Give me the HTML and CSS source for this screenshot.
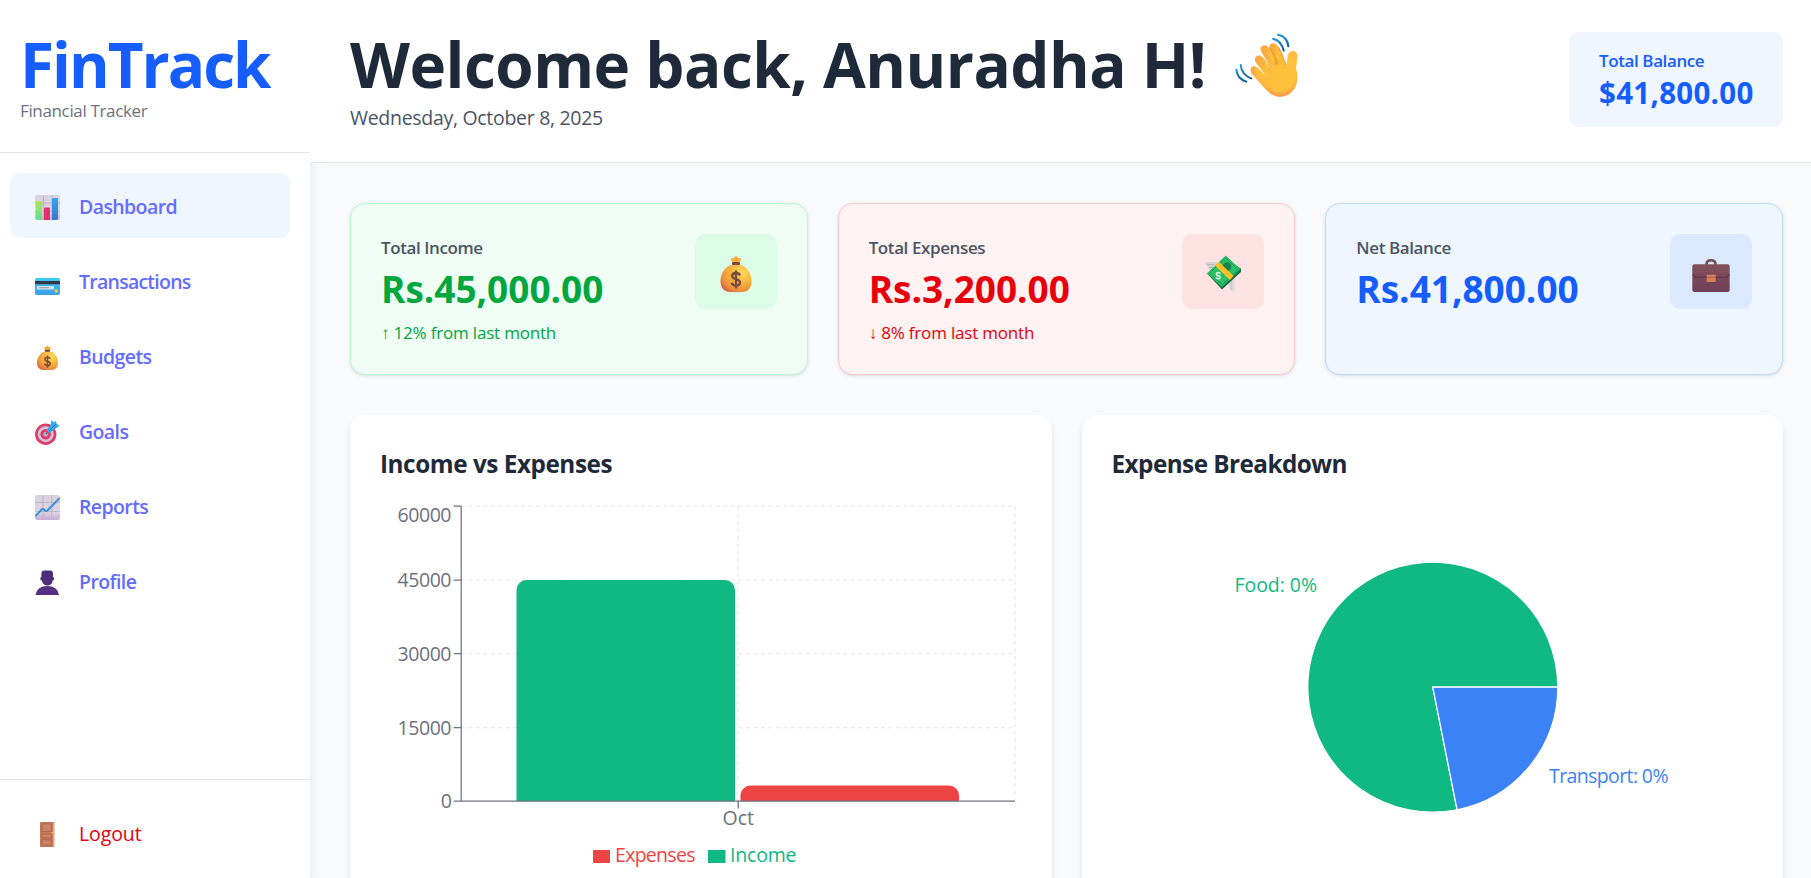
FILE: index.html
```
<!DOCTYPE html>
<html lang="en">
<head>
<meta charset="utf-8">
<title>FinTrack</title>
<link rel="stylesheet" href="styles.css">
</head>
<body>
<svg class="defs" width="0" height="0" aria-hidden="true">
  <defs>
    <linearGradient id="paper" x1="0" y1="0" x2="0" y2="1"><stop offset="0" stop-color="#d9d3df"/><stop offset=".7" stop-color="#ddd3e5"/><stop offset="1" stop-color="#c5aed6"/></linearGradient>
    <linearGradient id="lime" x1="0" y1="0" x2="0" y2="1"><stop offset="0" stop-color="#b4e35c"/><stop offset="1" stop-color="#5fe08c"/></linearGradient>
    <linearGradient id="azure" x1="0" y1="0" x2="0" y2="1"><stop offset="0" stop-color="#36a5ef"/><stop offset="1" stop-color="#3a78c0"/></linearGradient>
    <linearGradient id="cyan" x1="0" y1="0" x2="0" y2="1"><stop offset="0" stop-color="#38cdf0"/><stop offset="1" stop-color="#3a9ce8"/></linearGradient>
    <radialGradient id="gold" cx=".68" cy=".3" r=".8"><stop offset="0" stop-color="#ffd95a"/><stop offset=".45" stop-color="#f7b63f"/><stop offset=".8" stop-color="#ee913c"/><stop offset="1" stop-color="#d8663f"/></radialGradient>
    <radialGradient id="skin" cx=".6" cy=".35" r=".75"><stop offset="0" stop-color="#ffc93a"/><stop offset=".6" stop-color="#ffbc3e"/><stop offset="1" stop-color="#fb8a53"/></radialGradient>
    <linearGradient id="finger" x1="0" y1="0" x2="1" y2="0"><stop offset="0" stop-color="#fca941"/><stop offset=".6" stop-color="#ffc43a"/><stop offset="1" stop-color="#e49b28"/></linearGradient>
    <linearGradient id="motion" x1="0" y1="0" x2="0" y2="1"><stop offset="0" stop-color="#2196dd"/><stop offset="1" stop-color="#155694"/></linearGradient>
    <linearGradient id="leather" x1="0" y1="0" x2="0" y2="1"><stop offset="0" stop-color="#84505c"/><stop offset="1" stop-color="#6d3f58"/></linearGradient>
    <symbol id="bag" viewBox="0 0 32 37">
      <path d="M16 9C25 9 31.500 17 31.500 26 31.500 33 28 37 22 37H10C4 37 .5 33 .5 26 .5 17 7 9 16 9Z" fill="url(#gold)"/>
      <path d="M10.500 3.500 14 3 16 .5 18 3 21.500 3.500 19.500 7.500H12.500Z" fill="#f5ae3d"/>
      <rect x="12" y="7" width="8" height="3" rx="1" fill="#7a4a3e"/>
      <path d="M20 20.500C19.300 18.600 17.900 18 16 18 13.800 18 12.200 19 12.200 21 12.200 25.500 20 22.800 20 27.500 20 29.700 18.200 30.700 16 30.700 13.900 30.700 12.300 29.800 11.800 27.800M16 15.500V33.500" fill="none" stroke="#7a4a3e" stroke-width="2.300"/>
    </symbol>
  </defs>
</svg>
<div class="app">
  <aside class="sidebar">
    <div class="brand">
      <h1 class="brand-name">FinTrack</h1>
      <p class="brand-tag">Financial Tracker</p>
    </div>
    <nav class="nav">
      <a class="nav-item active">
        <svg class="nav-icon" viewBox="0 0 25 25"><rect width="25" height="25" rx="2" fill="url(#paper)"/><path d="M8.500 0V25M17 0V25M0 8H25M0 16.500H25" stroke="#b4acbc" stroke-width=".8"/><path d="M1 6h6v19H3a2 2 0 0 1-2-2Z" fill="url(#lime)"/><path d="M9 13.500a1 1 0 0 1 1-1h4a1 1 0 0 1 1 1V25H9Z" fill="#e3306f"/><path d="M17 4a1 1 0 0 1 1-1h4a1 1 0 0 1 1 1v19a2 2 0 0 1-2 2H17Z" fill="url(#azure)"/></svg>
        <span>Dashboard</span></a>
      <a class="nav-item">
        <svg class="nav-icon" viewBox="0 0 25 25"><rect y="8" width="25" height="17" rx="2" fill="url(#cyan)"/><rect y="11" width="25" height="3.200" fill="#3b3346"/><rect x="2" y="16" width="17" height="3.500" rx=".5" fill="#dbe3ea"/><path d="M4 17.700h10" stroke="#8e9aa8" stroke-width="1"/><circle cx="21.200" cy="21" r="2" fill="#d3c75d"/></svg>
        <span class="tight">Transactions</span></a>
      <a class="nav-item">
        <svg class="nav-icon" viewBox="0 0 25 25"><use href="#bag" x="1.700" y="0" width="21.600" height="25"/></svg>
        <span>Budgets</span></a>
      <a class="nav-item">
        <svg class="nav-icon" viewBox="0 0 25 25"><circle cx="10.700" cy="14.200" r="10.700" fill="#df3d68"/><circle cx="10.700" cy="14.200" r="8" fill="#cfc3da"/><circle cx="10.700" cy="14.200" r="5.300" fill="#df3d68"/><circle cx="10.700" cy="14.200" r="2.400" fill="#b9b3c9"/><path d="M11 14 16 8.500" stroke="#6d6080" stroke-width="1.500"/><path d="M12 9.500 15.500 5 16.500 0 19 2.500 21 .7 21.300 3.700 24.500 5.500 20 9 15 12.500 12.500 12.500Z" fill="#35a8ea"/><path d="M14.500 10.500 21.300 3.700" stroke="#2b79b8" stroke-width="1"/></svg>
        <span>Goals</span></a>
      <a class="nav-item">
        <svg class="nav-icon" viewBox="0 0 25 25"><rect width="25" height="25" rx="2.500" fill="url(#paper)"/><path d="M8 0V25M16.700 0V25M0 7.500H25M0 16.500H25" stroke="#b9b1c2" stroke-width=".8"/><path d="M.3 21.300 6.500 14.800Q8 13.300 9.300 14.800 11 17 12.700 15.300L24.700 3" fill="none" stroke="#3a92d8" stroke-width="2"/></svg>
        <span>Reports</span></a>
      <a class="nav-item">
        <svg class="nav-icon" viewBox="0 0 25 25"><path d="M6.500 2.500Q7 .5 9 .5H15Q18 0 18 4V7Q19.500 7 19 9.500 18.700 10.500 17.800 10.500 17 15.500 12.500 15.500 8 15.500 6.800 10.500 5.800 10.500 5.300 9.500 5 7 6.300 7Z" fill="#4b2d79"/><path d="M.5 25Q2 16 12.300 16 22.500 16 24 25Z" fill="#533082"/></svg>
        <span>Profile</span></a>
    </nav>
    <div class="sidebar-footer">
      <a class="nav-item logout">
        <svg class="nav-icon" viewBox="0 0 25 25"><rect x="5" width="14.300" height="25" rx=".6" fill="#c4785a"/><path d="M18.600 .5V24.500" stroke="#e8ab82" stroke-width="1.400"/><path d="M7 2H16.500V9.500H7ZM7 12H16.500V15.800H7ZM7 18H16.500V23H7Z" fill="#c98467" stroke="#a95d43" stroke-width=".7"/><path d="M5.500 10.700H17" stroke="#da7c4f"/><circle cx="17.500" cy="10.700" r="1" fill="#f8b425"/></svg>
        <span>Logout</span></a>
    </div>
  </aside>
  <div class="page">
    <header class="header">
      <div>
        <h1 class="welcome"><span>Welcome back, Anuradha H!</span>
          <svg class="wave" viewBox="104 69 192 195">
            <g fill="none" stroke="url(#motion)" stroke-width="6" stroke-linecap="round"><path d="M108 179Q110 206 138 215"/><path d="M121 165Q124 195 153 205"/><path d="M218 86Q244 92 250 122"/><path d="M233 74Q262 80 264 109"/></g>
            <path d="M262 138Q265 123 279 123 292 125 291 140 289 160 287 175 297 208 284 234 268 260 238 261 216 259 198 241L154 191Q146 176 157 169 164 168 172 173L200 200 245 170 259 163Z" fill="url(#skin)"/>
            <g stroke="url(#finger)" stroke-linecap="round" stroke-width="25"><path d="M219 112 246 168"/><path d="M193 118 231 181"/><path d="M176 149 216 202"/></g>
            <path d="M230 104Q248 128 255 163L240 166Z" fill="#ffbc35"/>
            <path d="M207 114 234 157M186 141 219 179" stroke="#c27b27" stroke-width="2.500" fill="none" opacity=".65"/>
            <path d="M234 111Q248 135 256 161" stroke="#a9762a" stroke-width="2.500" fill="none" opacity=".6"/>
            <ellipse cx="240" cy="205" rx="40" ry="43" fill="#ffbf3b"/>
          </svg></h1>
        <p class="date">Wednesday, October 8, 2025</p>
      </div>
      <div class="balance">
        <p class="balance-label">Total Balance</p>
        <p class="balance-value">$41,800.00</p>
      </div>
    </header>
    <main class="main">
      <section class="stats">
        <article class="stat income">
          <div>
            <p class="stat-label">Total Income</p>
            <p class="stat-value">Rs.45,000.00</p>
            <p class="stat-note">↑ 12% from last month</p>
          </div>
          <div class="stat-icon"><svg viewBox="0 0 38 38"><use href="#bag" x="3" y="1" width="32" height="37"/></svg></div>
        </article>
        <article class="stat expenses">
          <div>
            <p class="stat-label">Total Expenses</p>
            <p class="stat-value">Rs.3,200.00</p>
            <p class="stat-note">↓ 8% from last month</p>
          </div>
          <div class="stat-icon"><svg viewBox="0 0 38 38"><path d="M1 8H14L6 17Z" fill="#d6d3d8"/><path d="M3 10.500H10M5 13.500H9" stroke="#aeb0b4" stroke-width=".8"/><path d="M24 29 30.500 22V38Q24 36 24 29Z" fill="#dedade"/><path d="M27 26V36" stroke="#b9b7bb" stroke-width=".8"/><path d="M3 19.500 18 35.500 37 18V14.500L20 5Z" fill="#176b45"/><path d="M21.700 1.500 36.300 15 18 33 3 19.500Z" fill="#2bc168"/><path d="M21.500 4 34 15.300 18.500 30.500 5.500 19.500Z" fill="none" stroke="#179d51" stroke-width="1"/><circle cx="23" cy="12.500" r="4.300" fill="#168549"/><path d="M15 8 11 11.500 26 26 29.500 22Z" fill="#ffc025"/><path d="M16.500 19.500Q14 17.500 12.500 19.500 12 21.500 14.500 21.800 17 22.500 15.500 24.500 13.500 25.500 11.800 23.500" fill="none" stroke="#e8f4ea" stroke-width="1.500"/></svg></div>
        </article>
        <article class="stat net">
          <div>
            <p class="stat-label">Net Balance</p>
            <p class="stat-value">Rs.41,800.00</p>
          </div>
          <div class="stat-icon"><svg viewBox="0 0 38 38"><path d="M14.500 11V9.500Q15 6.300 19 6.300 23 6.300 23.500 9.500V11" fill="none" stroke="#754c50" stroke-width="2.600"/><rect x=".3" y="10.300" width="37.400" height="27.700" rx="2" fill="url(#leather)"/><path d="M1 20Q1.500 23.300 4 23.300H34Q36.500 23.300 37 20" fill="none" stroke="#5d2d44" stroke-width="1.100"/><rect x="14.700" y="20.800" width="9" height="7.200" rx=".8" fill="#db8059"/><path d="M15 23.300H23.500" stroke="#b65b45"/></svg></div>
        </article>
      </section>
      <section class="charts">
        <article class="chart">
          <h2 class="chart-title">Income vs Expenses</h2>
          <svg class="plot" viewBox="380 481 641.500 420">
            <g class="grid"><path d="M461 506H1015M461 580H1015M461 653.500H1015M461 727.500H1015M738 506V801M1015 506V801"/></g>
            <path d="M516.500 801V590a10 10 0 0 1 10-10H725a10 10 0 0 1 10 10V801Z" fill="#10b981"/>
            <path d="M740.500 801V795.500a10 10 0 0 1 10-10H949a10 10 0 0 1 10 10V801Z" fill="#ef4444"/>
            <path class="axis" d="M461.200 506V801.200M453.700 506H461M453.700 580H461M453.700 653.500H461M453.700 727.500H461M453.700 801.200H1015M738.200 801V808.500"/>
            <g class="ticks">
              <text x="397.500" y="521.500" textLength="54">60000</text><text x="397.500" y="587" textLength="54">45000</text><text x="397.500" y="661" textLength="54">30000</text><text x="397.500" y="735" textLength="54">15000</text><text x="440.700" y="808">0</text><text x="722.500" y="824.500" textLength="31.500">Oct</text>
            </g>
            <rect x="593" y="850" width="17" height="13" fill="#ef4444"/>
            <text x="615" y="862" fill="#ef4444" textLength="80.500">Expenses</text>
            <rect x="708" y="850" width="17.500" height="13" fill="#10b981"/>
            <text x="730" y="862" fill="#10b981" textLength="66.500">Income</text>
          </svg>
        </article>
        <article class="chart">
          <h2 class="chart-title breakdown">Expense Breakdown</h2>
          <svg class="plot" viewBox="1111.500 481 641.500 420">
            <g stroke="#fff" stroke-width="1.250"><path d="M1432.300 687.200H1557.300A125 125 0 1 0 1456.600 809.800Z" fill="#10b981"/><path d="M1432.300 687.200H1557.300A125 125 0 0 1 1456.600 809.800Z" fill="#3b82f6"/></g>
            <text x="1234" y="592" fill="#10b981" textLength="82.500">Food: 0%</text>
            <text x="1548.500" y="783" fill="#3b82f6" textLength="119.500">Transport: 0%</text>
          </svg>
        </article>
      </section>
    </main>
  </div>
</div>
</body>
</html>
```
FILE: styles.css
```
* { box-sizing: border-box; }
body { margin: 0; font-family: "Open Sans", "Noto Sans", sans-serif; background: #f9fafb; overflow: hidden; }
h1, h2, p { margin: 0; }
.defs { position: absolute; }
.app { display: flex; height: 878px; overflow: hidden; }

.sidebar { width: 310px; flex: none; display: flex; flex-direction: column; background: #fff; box-shadow: 0 12px 19px -4px rgba(0,0,0,.1), 0 5px 8px -5px rgba(0,0,0,.1); }
.brand { height: 153px; padding: 30px 20px 0; border-bottom: 1px solid #e5e7eb; }
.brand-name { font-size: 62px; line-height: 68px; font-weight: 700; letter-spacing: -2px; color: #155dfc; }
.brand-tag { font-size: 17px; line-height: 25px; letter-spacing: -.35px; color: #6a7282; }
.nav { flex: 1; padding: 20px 20px 0 10px; display: flex; flex-direction: column; gap: 10px; }
.nav-item { height: 65px; display: flex; align-items: center; gap: 19px; padding: 2px 25px 0; border-radius: 10px; font-size: 19.5px; font-weight: 600; letter-spacing: -.6px; color: #646cff; }
.nav-item.active { background: #eff6ff; }
.nav-item .tight { letter-spacing: -.75px; }
.nav-icon { width: 25px; height: 25px; flex: none; margin-top: 2px; }
.sidebar-footer { height: 99px; padding: 20px 20px 0 10px; border-top: 1px solid #e5e7eb; }
.nav-item.logout { color: #e7000b; font-weight: 400; letter-spacing: -.1px; }

.page { flex: 1; min-width: 0; }
.header { height: 163px; display: flex; justify-content: space-between; align-items: flex-start; padding: 30px 28px 0 40px; background: #fff; border-bottom: 1px solid #e5e7eb; }
.welcome { display: flex; gap: 29px; font-size: 62px; line-height: 68px; font-weight: 700; letter-spacing: -.51px; color: #1e2939; white-space: nowrap; }
.wave { width: 64px; height: 65px; margin-top: 3px; }
.date { margin-top: 5px; font-size: 19.5px; line-height: 29px; letter-spacing: -.3px; color: #4a5565; }
.balance { width: 214px; height: 95px; margin-top: 2px; padding: 16px 30px 0; border-radius: 10px; background: #eff6ff; color: #155dfc; }
.balance-label { font-size: 17px; line-height: 25px; font-weight: 600; letter-spacing: -.4px; }
.balance-value { font-size: 29.5px; line-height: 39px; font-weight: 700; letter-spacing: .28px; }

.main { padding: 40px 28px 0 40px; }
.stats { display: grid; grid-template-columns: repeat(3, 1fr); gap: 30px; }
.stat { height: 172px; display: flex; justify-content: space-between; align-items: flex-start; padding: 30px; border: 1px solid; border-radius: 15px; box-shadow: 0 1px 4px rgba(0,0,0,.1), 0 1px 2px -1px rgba(0,0,0,.1); }
.stat-label { margin-top: 1px; font-size: 17px; line-height: 25px; font-weight: 600; letter-spacing: -.4px; color: #4a5565; }
.stat-value { font-size: 37px; line-height: 57px; font-weight: 700; letter-spacing: -.02px; white-space: nowrap; }
.stat-note { margin-top: 3px; font-size: 17px; line-height: 25px; letter-spacing: -.19px; }
.stat-icon { width: 82px; height: 75px; display: flex; justify-content: center; padding-top: 20px; border-radius: 10px; }
.stat-icon svg { width: 38px; height: 38px; }
.income { background: #f0fdf4; border-color: #b9f8cf; color: #00a63e; }
.income .stat-icon { background: #dcfce7; }
.expenses { background: #fef2f2; border-color: #ffc9c9; color: #e7000b; }
.expenses .stat-icon { background: #ffe2e2; }
.net { background: #eff6ff; border-color: #bedbff; color: #155dfc; }
.net .stat-icon { background: #dbeafe; }

.charts { display: grid; grid-template-columns: repeat(2, 1fr); gap: 30px; margin-top: 40px; }
.chart { height: 500px; padding: 31px 30px 0; border-radius: 15px; background: #fff; box-shadow: 0 5px 8px -1px rgba(0,0,0,.1), 0 2px 5px -2px rgba(0,0,0,.1); }
.chart-title { height: 35px; font-size: 24.3px; line-height: 36px; font-weight: 700; letter-spacing: -.45px; color: #1e2939; }
.chart-title.breakdown { letter-spacing: -.55px; }
.plot { display: block; width: 641.5px; height: 420px; font-size: 19.5px; }
.grid { fill: none; stroke: #ccc; stroke-opacity: .4; stroke-width: 1.25; stroke-dasharray: 3.75 3.75; }
.axis { fill: none; stroke: #6b7280; stroke-width: 1.25; }
.ticks { fill: #6b7280; }
```
